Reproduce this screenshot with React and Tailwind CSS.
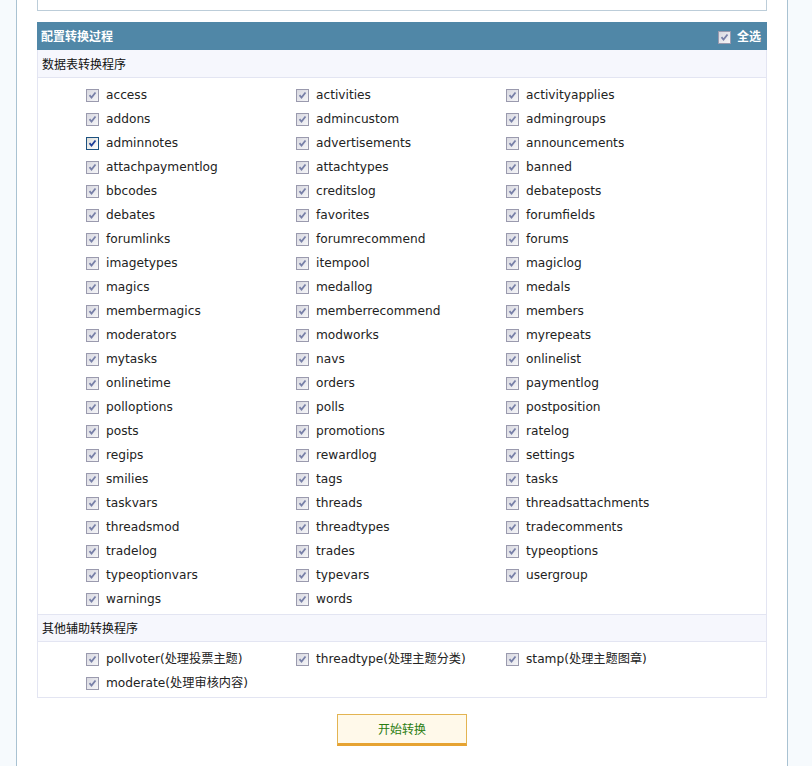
import React from "react";

const tables = [
  "access","activities","activityapplies",
  "addons","admincustom","admingroups",
  "adminnotes","advertisements","announcements",
  "attachpaymentlog","attachtypes","banned",
  "bbcodes","creditslog","debateposts",
  "debates","favorites","forumfields",
  "forumlinks","forumrecommend","forums",
  "imagetypes","itempool","magiclog",
  "magics","medallog","medals",
  "membermagics","memberrecommend","members",
  "moderators","modworks","myrepeats",
  "mytasks","navs","onlinelist",
  "onlinetime","orders","paymentlog",
  "polloptions","polls","postposition",
  "posts","promotions","ratelog",
  "regips","rewardlog","settings",
  "smilies","tags","tasks",
  "taskvars","threads","threadsattachments",
  "threadsmod","threadtypes","tradecomments",
  "tradelog","trades","typeoptions",
  "typeoptionvars","typevars","usergroup",
  "warnings","words",
];

const others = [
  "pollvoter(处理投票主题)",
  "threadtype(处理主题分类)",
  "stamp(处理主题图章)",
  "moderate(处理审核内容)",
];

function Box({ active }) {
  return (
    <span
      className={
        "inline-flex w-[13px] h-[13px] shrink-0 items-center justify-center border " +
        (active
          ? "border-[#1c5180] bg-gradient-to-br from-[#dcdcd7] to-white"
          : "border-[#9a9aae] bg-gradient-to-br from-[#d8d8e0] to-[#f6f6f8]")
      }
    >
      <svg width="9" height="9" viewBox="0 0 9 9">
        <path
          d="M1.5 4.2 L3.5 6.5 L7.5 1.5"
          fill="none"
          stroke={active ? "#1f3f9a" : "#7880a8"}
          strokeWidth="1.8"
        />
      </svg>
    </span>
  );
}

function Item({ label, active }) {
  return (
    <div className="flex items-center h-[24px] pt-[2px]">
      <Box active={active} />
      <span className="ml-[7px] text-[12.2px] text-[#222] whitespace-nowrap">{label}</span>
    </div>
  );
}

export default function App() {
  return (
    <div
      className="w-[812px] h-[766px] bg-[#f6fafd] pl-[16px] pr-[24px]"
      style={{ fontFamily: '"DejaVu Sans", Verdana, "Noto Sans CJK SC", sans-serif' }}
    >
      <div className="h-full bg-white border-x border-[#a9c2d2] px-[20px]">
        <div className="h-[11px] border-x border-b border-[#bccdd9]" />
        <div className="mt-[11px] border border-[#e3e5f2] border-t-0">
          <div className="h-[28px] bg-[#5087a7] flex items-center justify-between pl-[4px] pr-[6px] pt-[2px] -mx-px">
            <span className="text-white text-[12px] font-bold">配置转换过程</span>
            <div className="flex items-center">
              <Box active={false} />
              <span className="ml-[6px] text-white text-[12px] font-bold">全选</span>
            </div>
          </div>
          <div className="h-[28px] bg-[#f6f7fd] border-b border-[#e3e5f2] flex items-center pl-[4px] pt-[2px] text-[12px] text-[#111]">
            数据表转换程序
          </div>
          <div className="grid grid-cols-[210px_210px_210px] pl-[48px] py-[4px]">
            {tables.map((t) => (
              <Item key={t} label={t} active={t === "adminnotes"} />
            ))}
          </div>
          <div className="h-[28px] bg-[#f6f7fd] border-y border-[#e3e5f2] flex items-center pl-[4px] pt-[2px] text-[12px] text-[#111]">
            其他辅助转换程序
          </div>
          <div className="grid grid-cols-[210px_210px_210px] pl-[48px] pt-[4px] pb-[3px]">
            {others.map((t) => (
              <Item key={t} label={t} />
            ))}
          </div>
        </div>
        <div className="flex justify-center mt-[16px]">
          <button className="w-[130px] h-[32px] border border-[#e3b452] border-b-[3px] border-b-[#e6a332] bg-[#fff9ea] text-[#2a7d12] text-[12px] flex items-center justify-center pt-[2px]">
            开始转换
          </button>
        </div>
      </div>
    </div>
  );
}
